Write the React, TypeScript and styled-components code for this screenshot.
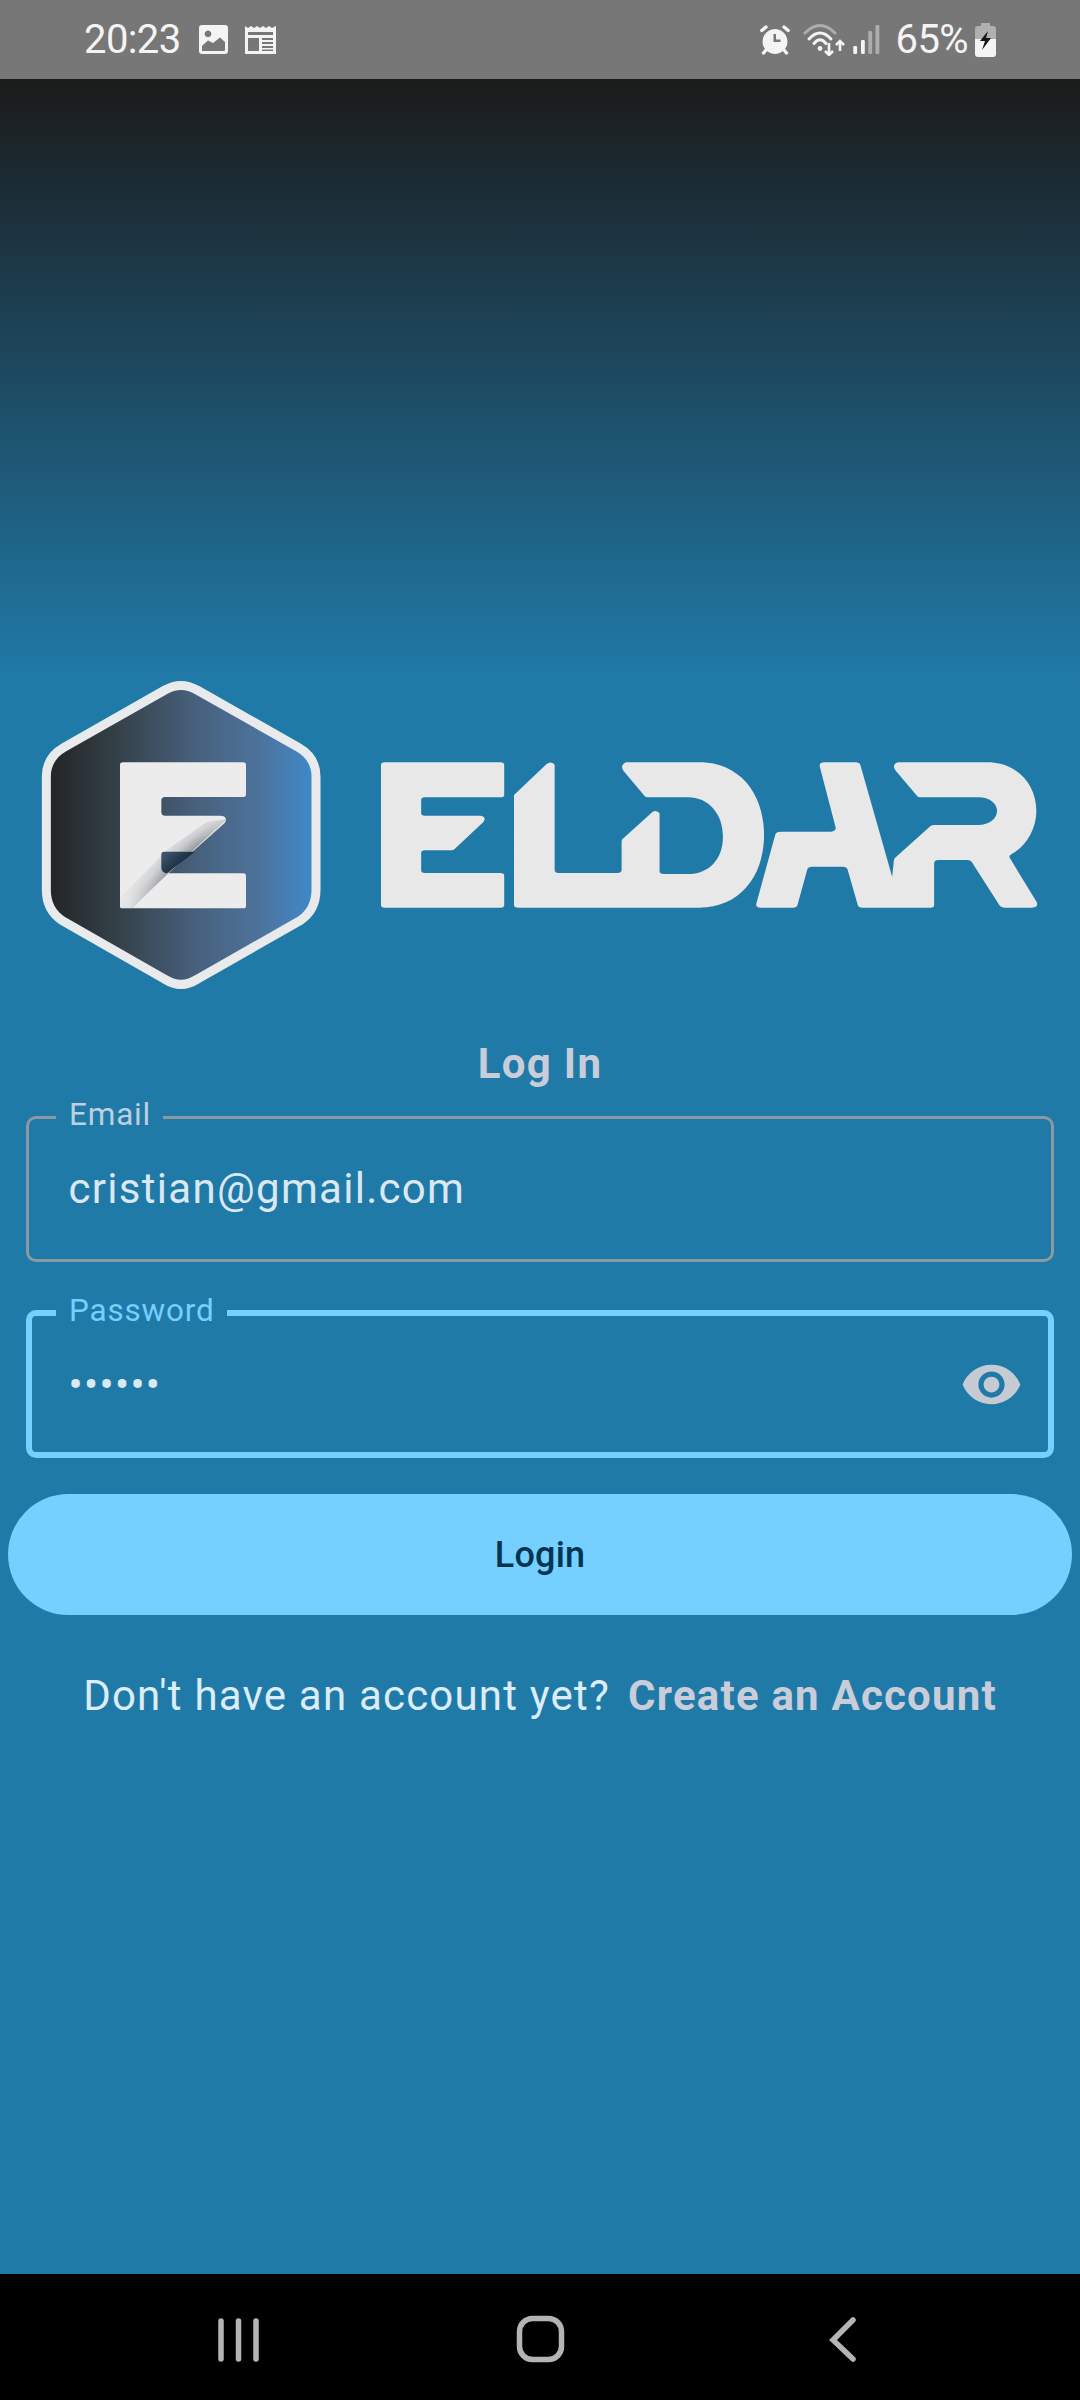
import React from 'react';
import styled, { createGlobalStyle } from 'styled-components';

const Global = createGlobalStyle`
  html, body { margin: 0; padding: 0; background: #000; }
  * { box-sizing: border-box; }
`;

const Page = styled.div`
  width: 1080px;
  height: 2400px;
  display: flex;
  flex-direction: column;
  font-family: Roboto, "Liberation Sans", sans-serif;
  overflow: hidden;
`;

const StatusBar = styled.header`
  height: 79px;
  flex: none;
  background: #777777;
  display: flex;
  align-items: center;
  justify-content: space-between;
  padding: 0 84px 0 84px;
  color: #f4f4f4;
`;

const StatusGroup = styled.div`
  display: flex;
  align-items: center;
`;

const StatusText = styled.span<{ $ml?: number }>`
  font-size: 40px;
  line-height: 79px;
  font-weight: 400;
  letter-spacing: -0.6px;
  margin-left: ${(p) => p.$ml ?? 0}px;
`;

const StatusIcon = styled.svg<{ $ml: number }>`
  display: block;
  flex: none;
  margin-left: ${(p) => p.$ml}px;
`;

const Main = styled.main`
  flex: 1;
  display: flex;
  flex-direction: column;
  padding-top: 581px;
  background: linear-gradient(180deg, #1b1b1b 0, #207aa8 600px);
`;

const Logo = styled.svg`
  display: block;
  width: 1040px;
  height: 340px;
  margin-left: 20px;
  flex: none;
`;

const Title = styled.h1`
  margin: 39px 0 0;
  height: 50px;
  font-size: 42px;
  line-height: 50px;
  font-weight: 700;
  letter-spacing: 1.3px;
  text-align: center;
  color: #c9cdd9;
`;

const Form = styled.form`
  display: flex;
  flex-direction: column;
  margin-top: 11px;
`;

const Field = styled.fieldset<{ $focused?: boolean }>`
  margin: ${(p) => (p.$focused ? '34px' : '0')} 26px 0;
  height: 162px;
  padding: 0 26px 0 ${(p) => (p.$focused ? '34px' : '37px')};
  border: ${(p) => (p.$focused ? '6px solid #75cfff' : '3px solid #8a99a3')};
  border-radius: 10px;
  min-width: 0;
`;

const FieldLabel = styled.legend<{ $focused?: boolean }>`
  padding: 0 12px 0 13px;
  margin-left: -10px;
  height: 34px;
  font-size: 31.5px;
  line-height: 30px;
  letter-spacing: 0.8px;
  color: ${(p) => (p.$focused ? '#75cfff' : '#bcd0df')};
`;

const FieldRow = styled.div`
  height: 110px;
  padding-left: 2.5px;
  display: flex;
  align-items: center;
  justify-content: space-between;
`;

const FieldValue = styled.span`
  font-size: 42px;
  line-height: 50px;
  letter-spacing: 1.3px;
  color: #dbe7f1;
`;

const EyeIcon = styled.svg`
  display: block;
  width: 63px;
  height: 63px;
  margin: 0 -1px 2px 0;
  fill: #c6cbd3;
  flex: none;
`;

const LoginButton = styled.button`
  margin: 36px 8px 0;
  height: 121px;
  border: 0;
  border-radius: 61px;
  background: #75cfff;
  color: #00344f;
  font-family: inherit;
  font-size: 36px;
  font-weight: 500;
  letter-spacing: 0.2px;
`;

const Prompt = styled.p`
  margin: 56px 0 0;
  display: flex;
  justify-content: center;
  gap: 18px;
  font-size: 42px;
  line-height: 50px;
  letter-spacing: 1.2px;
  color: #dcecf8;
`;

const PromptLink = styled.a`
  font-weight: 700;
  color: #c9cdd9;
`;

const NavBar = styled.nav`
  height: 126px;
  flex: none;
  background: #000;
`;

const NavIcons = styled.svg`
  display: block;
  width: 1080px;
  height: 126px;
`;

const wordPath1 =
  'M47 75Q47 67 55 67H315Q323 67 323 75V165Q323 172 315 172H145Q137 172 137 180V219Q137 227 145 227H270Q284 230 277 245L212 327Q209 331 205 331H145Q137 331 137 339V391Q137 399 145 399H315Q323 399 323 407V495Q323 503 315 503H55Q47 503 47 495Z';
const wordPath2 =
  'M345 165L418 72Q428 62 436 74V390Q436 399 445 399H576Q586 399 586 390V305Q586 298 590 295L655 216Q663 208 671 220V393Q671 402 680 402H735C780 402 813 360 813 290C813 220 780 172 735 172H645Q640 172 637 167L590 92Q582 75 596 67H760C850 67 905 160 905 285C905 410 850 503 760 503H355Q345 503 345 495Z';
const wordPath3 =
  'M888 490L930 285Q932 275 942 275H1055Q1068 273 1065 260L1030 80Q1028 67 1040 67H1110Q1119 67 1121 76L1192 410L1196 360Q1197 355 1200 352L1278 258Q1281 255 1286 255H1385C1410 255 1427 235 1427 213C1427 190 1410 172 1385 172H1255Q1250 172 1248 168L1200 92Q1190 75 1205 67H1405C1470 67 1515 130 1515 213C1515 270 1490 320 1460 342Q1452 347 1456 355L1516 487Q1520 503 1505 503H1445Q1436 503 1432 495L1370 365Q1368 360 1360 360H1296Q1286 360 1286 370V495Q1286 503 1278 503H1125Q1117 503 1115 495L1092 388Q1090 380 1082 380H1012Q1004 380 1002 388L980 495Q978 503 970 503H898Q885 503 888 490Z';

const ePath =
  'M300 315Q300 307 308 307H670Q678 307 678 315V403Q678 411 670 411H435Q424 411 424 422V456Q424 467 435 467H600Q626 468 615 488L445 640H670Q678 640 678 648V737Q678 745 670 745H308Q300 745 300 737Z';
const foldBand = 'M620 478L445 640L335 745H300V715L440 570L560 486Z';

function LogoMark() {
  return (
    <Logo viewBox="20 660 1040 340" aria-label="Eldar">
      <defs>
        <linearGradient id="hex" gradientUnits="userSpaceOnUse" x1="90" x2="880" y1="0" y2="0">
          <stop offset="0" stopColor="#232526" />
          <stop offset="0.28" stopColor="#36434c" />
          <stop offset="0.55" stopColor="#47607c" />
          <stop offset="0.8" stopColor="#4d739c" />
          <stop offset="1" stopColor="#3f89cb" />
        </linearGradient>
        <linearGradient id="foldDark" gradientUnits="userSpaceOnUse" x1="482" y1="612" x2="440" y2="566">
          <stop offset="0" stopColor="#1c2e42" />
          <stop offset="1" stopColor="#3f5a74" />
        </linearGradient>
        <linearGradient id="foldShade" gradientUnits="userSpaceOnUse" x1="470" y1="622" x2="420" y2="567">
          <stop offset="0" stopColor="#8e9196" />
          <stop offset="0.45" stopColor="#c8cacd" />
          <stop offset="1" stopColor="#ececec" />
        </linearGradient>
        <linearGradient id="foldFade" gradientUnits="userSpaceOnUse" x1="620" y1="478" x2="335" y2="745">
          <stop offset="0" stopColor="#ececec" stopOpacity="0.7" />
          <stop offset="0.3" stopColor="#ececec" stopOpacity="0" />
          <stop offset="0.6" stopColor="#ececec" stopOpacity="0" />
          <stop offset="1" stopColor="#ececec" stopOpacity="0.85" />
        </linearGradient>
        <clipPath id="eClip">
          <path d={ePath} />
        </clipPath>
      </defs>
      <g transform="translate(20 660) scale(0.33333)">
        <path
          d="M435 90Q483 63 531 90L835 262Q888 292 888 350V690Q888 750 840 782L531 958Q483 988 435 958L127 782Q79 750 79 690V350Q79 292 132 262Z"
          fill="url(#hex)"
          stroke="#e9eaec"
          strokeWidth="27"
        />
        <path d={ePath} fill="#ececec" />
        <g clipPath="url(#eClip)">
          <path d={foldBand} fill="url(#foldShade)" />
          <path d={foldBand} fill="url(#foldFade)" />
        </g>
        <path d="M424 583Q424 575 432 575H525L441 640Q424 638 424 622Z" fill="url(#foldDark)" />
      </g>
      <g transform="translate(360 740) scale(0.44643 0.33333)" fill="#e8e8e9">
        <path d={wordPath1} />
        <path d={wordPath2} />
        <path d={wordPath3} />
      </g>
    </Logo>
  );
}

export default function App() {
  return (
    <Page>
      <Global />
      <StatusBar>
        <StatusGroup>
          <StatusText>20:23</StatusText>
          <StatusIcon $ml={18} width="29" height="29" viewBox="0 0 29 29">
            <path
              fill="#f4f4f4"
              fillRule="evenodd"
              d="M3 0H26Q29 0 29 3V26Q29 29 26 29H3Q0 29 0 26V3Q0 0 3 0ZM9 5.5A3.4 3.4 0 1 0 9.001 5.5ZM3.5 26H24.5Q26 26 26 24.5V17L21 12.5L14 18L9 15.5L3 21V24.5Q3 26 3.5 26Z"
            />
          </StatusIcon>
          <StatusIcon $ml={17} width="31" height="28" viewBox="0 0 31 28">
            <path
              fill="#f4f4f4"
              fillRule="evenodd"
              d="M0 0L3 2L6 0L9 2L12 0L15 2L18 0L21 2L24 0L27 2L31 0V28H0ZM3 6V9H28V6ZM3 12V25H14V12ZM17 12V14H28V12ZM17 16V18H28V16ZM17 20V22H28V20ZM17 23.5V25H28V23.5Z"
            />
          </StatusIcon>
        </StatusGroup>
        <StatusGroup>
          <StatusIcon $ml={0} width="30" height="30" viewBox="0 0 30 30">
            <path
              fill="#f4f4f4"
              fillRule="evenodd"
              d="M15 4A12.5 12.5 0 1 1 14.99 4ZM13.5 9V17H20.5V14.5H16V9Z"
            />
            <path stroke="#f4f4f4" strokeWidth="3.4" strokeLinecap="round" fill="none" d="M1.8 5.5L6 2M28.2 5.5L24 2M6 25L3.5 28M24 25L26.5 28" />
          </StatusIcon>
          <StatusIcon $ml={13} width="42" height="32" viewBox="0 0 42 32">
            <g fill="none" strokeWidth="3" strokeLinecap="round">
              <path stroke="#adadad" d="M2 9Q17 -6 32 9" />
              <path stroke="#f4f4f4" d="M6 15Q17 3 28 15M11 19.5Q17 12 23 19.5" />
            </g>
            <circle cx="17" cy="24.5" r="2.4" fill="#f4f4f4" />
            <path stroke="#f4f4f4" strokeWidth="2.6" fill="none" d="M26 19V31M22 27L26 31L30 27M37 27V17M33 21L37 17L41 21" />
          </StatusIcon>
          <StatusIcon $ml={8} width="28" height="30" viewBox="0 0 28 30">
            <rect x="0.3" y="21" width="3.8" height="8" rx="1.2" fill="#f4f4f4" />
            <rect x="8" y="15" width="3.8" height="14" rx="1.2" fill="#f4f4f4" />
            <rect x="15.3" y="6" width="3.8" height="23" rx="1.2" fill="#adadad" />
            <rect x="22.5" y="0" width="3.8" height="29" rx="1.2" fill="#adadad" />
          </StatusIcon>
          <StatusText $ml={15}>65%</StatusText>
          <StatusIcon $ml={7} width="21" height="34" viewBox="0 0 21 34">
            <path fill="#b0b0b0" d="M6 0H15V3H18Q21 3 21 6V16H0V6Q0 3 3 3H6Z" />
            <path fill="#f4f4f4" d="M0 16H21V31Q21 34 18 34H3Q0 34 0 31Z" />
            <path fill="#151515" d="M13 8L5 18H10L7 27L16 15H11Z" />
          </StatusIcon>
        </StatusGroup>
      </StatusBar>
      <Main>
        <LogoMark />
        <Title>Log In</Title>
        <Form>
          <Field>
            <FieldLabel>Email</FieldLabel>
            <FieldRow>
              <FieldValue>cristian@gmail.com</FieldValue>
            </FieldRow>
          </Field>
          <Field $focused>
            <FieldLabel $focused>Password</FieldLabel>
            <FieldRow>
              <FieldValue>••••••</FieldValue>
              <EyeIcon viewBox="0 0 24 24">
                <path d="M12 4.5C7 4.5 2.73 7.61 1 12c1.73 4.39 6 7.5 11 7.5s9.27-3.11 11-7.5c-1.73-4.39-6-7.5-11-7.5zM12 17c-2.76 0-5-2.24-5-5s2.24-5 5-5 5 2.24 5 5-2.24 5-5 5zm0-8c-1.66 0-3 1.34-3 3s1.34 3 3 3 3-1.34 3-3-1.34-3-3-3z" />
              </EyeIcon>
            </FieldRow>
          </Field>
          <LoginButton type="button">Login</LoginButton>
        </Form>
        <Prompt>
          <span>Don't have an account yet?</span>
          <PromptLink>Create an Account</PromptLink>
        </Prompt>
      </Main>
      <NavBar>
        <NavIcons viewBox="0 2274 1080 126">
          <g stroke="#b4b4b4" strokeLinecap="round" fill="none">
            <path strokeWidth="5.5" d="M221 2321V2359M238.5 2321V2359M256 2321V2359" />
            <rect x="519.5" y="2318.5" width="42" height="41" rx="13" strokeWidth="5.5" />
            <path strokeWidth="5.5" d="M853 2320L833 2340L853 2359" />
          </g>
        </NavIcons>
      </NavBar>
    </Page>
  );
}
